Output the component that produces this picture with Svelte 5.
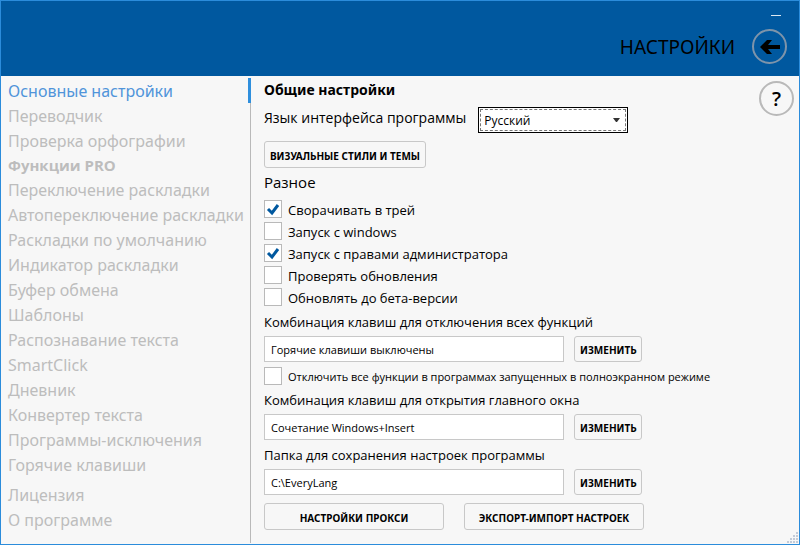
<script lang="ts">
  let active = "Основные настройки";

  const general = ["Основные настройки", "Переводчик", "Проверка орфографии"];
  const pro = [
    "Переключение раскладки",
    "Автопереключение раскладки",
    "Раскладки по умолчанию",
    "Индикатор раскладки",
    "Буфер обмена",
    "Шаблоны",
    "Распознавание текста",
    "SmartClick",
    "Дневник",
    "Конвертер текста",
    "Программы-исключения",
    "Горячие клавиши",
  ];
  const about = ["Лицензия", "О программе"];

  let options = [
    { label: "Сворачивать в трей", checked: true },
    { label: "Запуск с windows", checked: false },
    { label: "Запуск с правами администратора", checked: true },
    { label: "Проверять обновления", checked: false },
    { label: "Обновлять до бета-версии", checked: false },
  ];

  let language = "Русский";
  let fullscreenOff = false;
  let offKeys = "Горячие клавиши выключены";
  let openKeys = "Сочетание Windows+Insert";
  let folder = "C:\\EveryLang";
</script>

<div class="window">
  <header>
    <button class="minimize" aria-label="Свернуть"></button>
    <div class="title">
      <h1>НАСТРОЙКИ</h1>
      <button class="round back" aria-label="Назад">
        <svg width="20" height="16" viewBox="0 0 20 16">
          <path d="M0 8 7 1h5L8 6h12v4H8l4 5H7z" />
        </svg>
      </button>
    </div>
  </header>

  <div class="body">
    <nav>
      {#each general as item}
        <button class="item" class:active={item === active} on:click={() => (active = item)}>{item}</button>
      {/each}
      <h2>Функции PRO</h2>
      {#each pro as item}
        <button class="item" class:active={item === active} on:click={() => (active = item)}>{item}</button>
      {/each}
      <div class="about">
        {#each about as item}
          <button class="item" class:active={item === active} on:click={() => (active = item)}>{item}</button>
        {/each}
      </div>
    </nav>

    <main>
      <h3>Общие настройки</h3>
      <div class="language">
        <label for="language">Язык интерфейса программы</label>
        <div class="select">
          <select id="language" bind:value={language}>
            <option>Русский</option>
            <option>English</option>
          </select>
          <svg width="7" height="4" viewBox="0 0 7 4"><path d="M0 0h7L4 4H3z" /></svg>
        </div>
      </div>
      <button class="btn styles">ВИЗУАЛЬНЫЕ СТИЛИ И ТЕМЫ</button>

      <h4>Разное</h4>
      <div class="options">
        {#each options as option}
          <label class="check">
            <input type="checkbox" bind:checked={option.checked} />
            <svg viewBox="0 0 18 18"><path d="M4 9l4 4 6-8" /></svg>
            {option.label}
          </label>
        {/each}
      </div>

      <label class="caption" for="off">Комбинация клавиш для отключения всех функций</label>
      <div class="field">
        <input id="off" type="text" readonly bind:value={offKeys} />
        <button class="btn">ИЗМЕНИТЬ</button>
      </div>
      <label class="check small">
        <input type="checkbox" bind:checked={fullscreenOff} />
        <svg viewBox="0 0 18 18"><path d="M4 9l4 4 6-8" /></svg>
        Отключить все функции в программах запущенных в полноэкранном режиме
      </label>

      <label class="caption" for="open">Комбинация клавиш для открытия главного окна</label>
      <div class="field">
        <input id="open" type="text" readonly bind:value={openKeys} />
        <button class="btn">ИЗМЕНИТЬ</button>
      </div>

      <label class="caption" for="folder">Папка для сохранения настроек программы</label>
      <div class="field">
        <input id="folder" type="text" readonly bind:value={folder} />
        <button class="btn">ИЗМЕНИТЬ</button>
      </div>

      <div class="bottom">
        <button class="btn">НАСТРОЙКИ ПРОКСИ</button>
        <button class="btn">ЭКСПОРТ-ИМПОРТ НАСТРОЕК</button>
      </div>
    </main>

    <aside>
      <button class="round help" aria-label="Справка">?</button>
    </aside>
  </div>

  <svg class="grip" width="12" height="12" viewBox="0 0 12 12">
    <path d="M9 0h2v2H9zM6 3h2v2H6zM9 3h2v2H9zM3 6h2v2H3zM6 6h2v2H6zM9 6h2v2H9zM0 9h2v2H0zM3 9h2v2H3zM6 9h2v2H6zM9 9h2v2H9z" />
  </svg>
</div>

<style>
  :global(body) {
    background: #f7f7f7;
  }

  .window {
    position: relative;
    display: flex;
    flex-direction: column;
    box-sizing: border-box;
    min-height: 100vh;
    border: 1px solid #2b8cdb;
    background: #f7f7f7;
    color: #000;
    font-family: "Noto Sans", "Open Sans", sans-serif;
    font-size: 14px;
    line-height: 20px;
  }

  h1,
  h2,
  h3,
  h4 {
    margin: 0;
  }

  button,
  input,
  select {
    box-sizing: border-box;
    margin: 0;
    font-family: inherit;
    color: inherit;
  }

  button {
    padding: 0;
    border: 0;
    background: none;
  }

  header {
    display: flex;
    flex-direction: column;
    align-items: flex-end;
    box-sizing: border-box;
    height: 75px;
    padding: 8px 12px 0 0;
    background: #00589f;
  }

  .minimize {
    display: flex;
    align-items: center;
    width: 22px;
    height: 12px;
    padding: 0 6px;
  }

  .minimize::before {
    content: "";
    width: 10px;
    height: 1px;
    background: #dce8f2;
  }

  .title {
    display: flex;
    align-items: center;
    gap: 17px;
    padding-top: 8px;
  }

  h1 {
    font-size: 19px;
    font-weight: 400;
    line-height: 24px;
  }

  .round {
    display: flex;
    align-items: center;
    justify-content: center;
    width: 35px;
    height: 35px;
    border: 2px solid #b9b9b9;
    border-radius: 50%;
  }

  .back {
    border-color: #7e94aa;
  }

  .help {
    font-family: "Open Sans", sans-serif;
    font-size: 20px;
    font-weight: 600;
  }

  .body {
    display: flex;
    flex: 1;
  }

  nav {
    display: flex;
    flex-direction: column;
    flex: none;
    box-sizing: border-box;
    width: 250px;
    margin: 2px 0 1px;
    border-right: 1px solid #b9b9b9;
    color: #bdbdbd;
    font-size: 16px;
  }

  .item {
    height: 25px;
    padding-left: 7px;
    font-size: 16px;
    line-height: 24px;
    text-align: left;
    white-space: nowrap;
  }

  .active {
    margin-right: -1px;
    border-right: 3px solid #2f8fdd;
    color: #5094da;
  }

  h2 {
    padding-left: 7px;
    font-family: "Open Sans", sans-serif;
    font-size: 15px;
    line-height: 24px;
  }

  .about {
    display: flex;
    flex-direction: column;
    margin-top: 5px;
  }

  main {
    flex: 1;
    padding: 4px 0 14px 13px;
    font-family: "Open Sans", sans-serif;
  }

  h3 {
    font-family: "Noto Sans", sans-serif;
    font-size: 14px;
    line-height: 20px;
  }

  .language {
    display: flex;
    gap: 12px;
    margin-top: 7px;
  }

  .language label {
    line-height: 22px;
  }

  .select {
    position: relative;
    width: 150px;
  }

  select {
    display: block;
    width: 100%;
    height: 26px;
    padding: 0 5px;
    appearance: none;
    border: 1px solid #000;
    border-radius: 0;
    outline: 1px dashed #777;
    outline-offset: -3px;
    background: #fff;
    font-size: 12px;
  }

  .select svg {
    position: absolute;
    top: 11px;
    right: 8px;
    fill: #333;
    pointer-events: none;
  }

  .btn {
    height: 26px;
    padding: 2px 5px 0;
    border: 1px solid #c8c8c8;
    border-radius: 3px;
    font-family: "Noto Sans", sans-serif;
    font-size: 10px;
    font-weight: 700;
    white-space: nowrap;
  }

  .styles {
    height: 27px;
    margin-top: 8px;
  }

  h4 {
    margin-top: 4px;
    font-size: 15px;
    font-weight: 400;
    line-height: 20px;
  }

  .options {
    display: flex;
    flex-direction: column;
    gap: 4px;
    margin: 8px 0 6px;
    font-size: 13px;
  }

  .check {
    display: grid;
    grid-template-columns: 18px 1fr;
    column-gap: 6px;
    align-items: start;
    height: 18px;
  }

  .check input {
    grid-area: 1 / 1;
    width: 18px;
    height: 18px;
    appearance: none;
    border: 1px solid #b9b9b9;
    background: #fff;
  }

  .check svg {
    grid-area: 1 / 1;
    z-index: 1;
    width: 18px;
    height: 18px;
    fill: none;
    stroke: #00589f;
    stroke-width: 3;
    visibility: hidden;
    pointer-events: none;
  }

  .check input:checked + svg {
    visibility: visible;
  }

  .small {
    margin: 5px 0;
    font-size: 11px;
  }

  .caption {
    display: block;
    margin-bottom: 4px;
    font-size: 13px;
  }

  .field {
    display: flex;
    gap: 10px;
    margin-bottom: 5px;
  }

  .field input {
    width: 300px;
    height: 26px;
    padding: 0 6px;
    border: 1px solid #c8c8c8;
    background: #fff;
    font-size: 11px;
  }

  .field .btn {
    width: 68px;
  }

  .bottom {
    display: flex;
    gap: 20px;
    margin-top: 8px;
  }

  .bottom .btn {
    width: 180px;
    height: 27px;
  }

  aside {
    flex: none;
    padding: 5px 5px 0 0;
  }

  .grip {
    position: absolute;
    right: 0;
    bottom: 0;
    fill: #c3cbd8;
  }
</style>
